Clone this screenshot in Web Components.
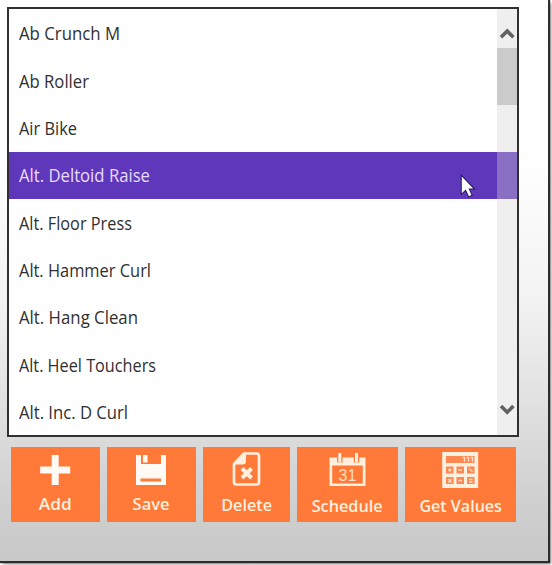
<!DOCTYPE html>
<html lang="en"><head><meta charset="utf-8"><title>Exercises</title>
<style>html,body{margin:0;height:100%;overflow:hidden;background:#fff}</style></head>
<body>
<exercise-app></exercise-app>
<script>
const define = (name, html, setup) => customElements.define(name, class extends HTMLElement {
  constructor() {
    super();
    this.attachShadow({mode: 'open'}).innerHTML = html;
  }
  connectedCallback() { if (setup) setup(this); }
});

define('list-row', `<style>
:host{display:flex;align-items:center;height:47.35px;flex:none;padding:1px 0 0 10px;color:#303030;white-space:nowrap;box-sizing:border-box}
:host([selected]){background:#5f37bb;color:#eadcff}
span{display:block;transform-origin:0 50%}
</style><span><slot></slot></span>`, fit);

// Condenses a label to the width given in its "w" attribute.
function fit(el) {
  const s = el.shadowRoot.querySelector('span');
  const w = parseFloat(el.getAttribute('w'));
  if (w) s.style.transform = 'scaleX(' + w / s.getBoundingClientRect().width + ')';
}

define('scroll-bar', `<style>
:host{display:flex;flex-direction:column;width:20px;background:linear-gradient(#efefef 0 142.55px,#8a70c5 142.55px 189.9px,#efefef 189.9px)}
svg{width:20px;height:39px;fill:none;stroke:#626262;stroke-width:3.6;flex:none}
i{height:57px;background:#cbcbcb}
b{flex:1}
</style><svg viewBox="0 0 20 39"><path d="M4 28.300 10.200 22 16.400 28.300"/></svg><i></i><b></b>
<svg viewBox="0 0 20 39"><path d="M4 10 10.200 16.300 16.400 10"/></svg>`);

define('list-box', `<style>
:host{display:flex;box-sizing:border-box;width:512px;height:430px;border:2.5px solid #303033;background:#fff;overflow:hidden}
div{flex:1;display:flex;flex-direction:column;min-width:0;overflow:hidden;padding-top:.4px}
</style><div><slot></slot></div><scroll-bar></scroll-bar>`);

define('tile-button', `<style>
:host{display:flex;flex-direction:column;align-items:center;height:74.5px;background:#ff7938;color:#fff0df;font-size:17px;font-weight:600;line-height:24px;box-sizing:border-box;white-space:nowrap}
.icon{height:44.5px;flex:none}
::slotted(svg){display:block;width:44px;height:44px}
span{display:block}
:host([low]) span{margin-top:2px}
:host([mid]) span{margin-top:1px}
</style><div class="icon"><slot name="icon"></slot></div><span><slot></slot></span>`, fit);

define('exercise-app', `<style>
:host{display:block;position:relative;width:548px;height:561px;box-sizing:border-box;padding:7.3px 0 0 7.3px;
background:linear-gradient(#fff 0,#fefefe 30%,#f3f3f3 53%,#e1e1e1 72%,#d1d1d1 88%,#c8c8c8 100%);
font:17.3px "Open Sans","Noto Sans",sans-serif;box-shadow:1px 1px 1px 1px #2d2d2d,3px 3px 3px #888}
nav{display:grid;grid-template-columns:89px 89px 87px 101px 111px;gap:7px;margin:10px 0 0 3.7px}
.cursor{position:absolute;left:459px;top:173px;width:19px;height:27px}
</style>
<list-box>
<list-row w="101">Ab Crunch M</list-row><list-row w="70">Ab Roller</list-row><list-row w="58">Air Bike</list-row>
<list-row w="131" selected>Alt. Deltoid Raise</list-row><list-row w="113">Alt. Floor Press</list-row><list-row w="132">Alt. Hammer Curl</list-row>
<list-row w="119">Alt. Hang Clean</list-row><list-row w="137">Alt. Heel Touchers</list-row><list-row w="109">Alt. Inc. D Curl</list-row>
</list-box>
<nav>
<tile-button w="33">Add<svg slot="icon" viewBox="0 0 44 44"><path fill="#fffaf4" d="M18.700 8h7v11.500h11.500v7H25.700V38h-7V26.500H7.200v-7h11.500z"/></svg></tile-button>
<tile-button w="37">Save<svg slot="icon" viewBox="0 0 44 44"><path fill="#fffaf4" fill-rule="evenodd" d="M7 8h5v9h20V8h5v30H7zM11.500 31.500v3h20.500v-3z"/><path fill="#fffaf4" d="M14 8h4.500v7.500H14z"/></svg></tile-button>
<tile-button w="51" mid>Delete<svg slot="icon" viewBox="0 0 44 44" fill="none" stroke="#ffefdf"><path stroke-width="2.700" stroke-linejoin="round" d="M20 6.500H32.500Q35 6.500 35 9V35Q35 37.500 32.500 37.500H12.500Q10 37.500 10 35V17z"/><path fill="#ffefdf" stroke="none" d="M18.500 6h3.500v8Q22 17.500 18.500 17.500H9.500z"/><path stroke-width="4" d="m18 21.500 9.500 9.500m0-9.500L18 31"/></svg></tile-button>
<tile-button w="71" low>Schedule<svg slot="icon" viewBox="0 0 44 44"><path fill="#ffefdf" fill-rule="evenodd" d="M4.500 10.500h36v28.500h-36zM7.200 18.500v18h30.600v-18z"/><path stroke="#ff7938" stroke-width="5.500" d="M14.800 8v7.500M31.500 8v7.500"/><path stroke="#ffefdf" stroke-width="3" d="M14.800 6v9.500M31.500 6v9.500"/><text x="22.500" y="33.500" text-anchor="middle" fill="#ffdfc6" font-family="Liberation Sans,sans-serif" font-weight="400" font-size="16">31</text></svg></tile-button>
<tile-button w="82.500" low>Get Values<svg slot="icon" viewBox="0 0 44 44"><path fill="#ffefdf" d="M4.200 5h36v36h-36z"/><path fill="#ff8850" d="M8 9h28.500v7H8zM8 19.500h7.500v7H8zM18.500 19.500H26v7h-7.500zM29 19.500h7.500v7H29zM8 30h7.500v7H8zM18.500 30H26v7h-7.500zM29 30h7.500v7H29z"/><path fill="none" stroke="#ffe2cd" stroke-width="1.300" d="M24.500 10.500h2v4M28.500 10.500h2v4M32.500 10.500h2v4M10 23h3.500M11.750 21.200v3.600M20.500 23H24M31 21.500l3.500 3M10 32l3.500 3.500m0-3.500L10 35.500M20.500 33.500H24M31 32.500h3.500M31 35h3.500"/></svg></tile-button>
</nav>
<svg class="cursor" viewBox="0 0 18 26"><path d="M2 2v18.500l4.200-3.700 3 6.200 3.300-1.500-2.700-6h5z" fill="#fff" stroke="#2c1768" stroke-width="1"/></svg>`);
</script>
</body></html>
